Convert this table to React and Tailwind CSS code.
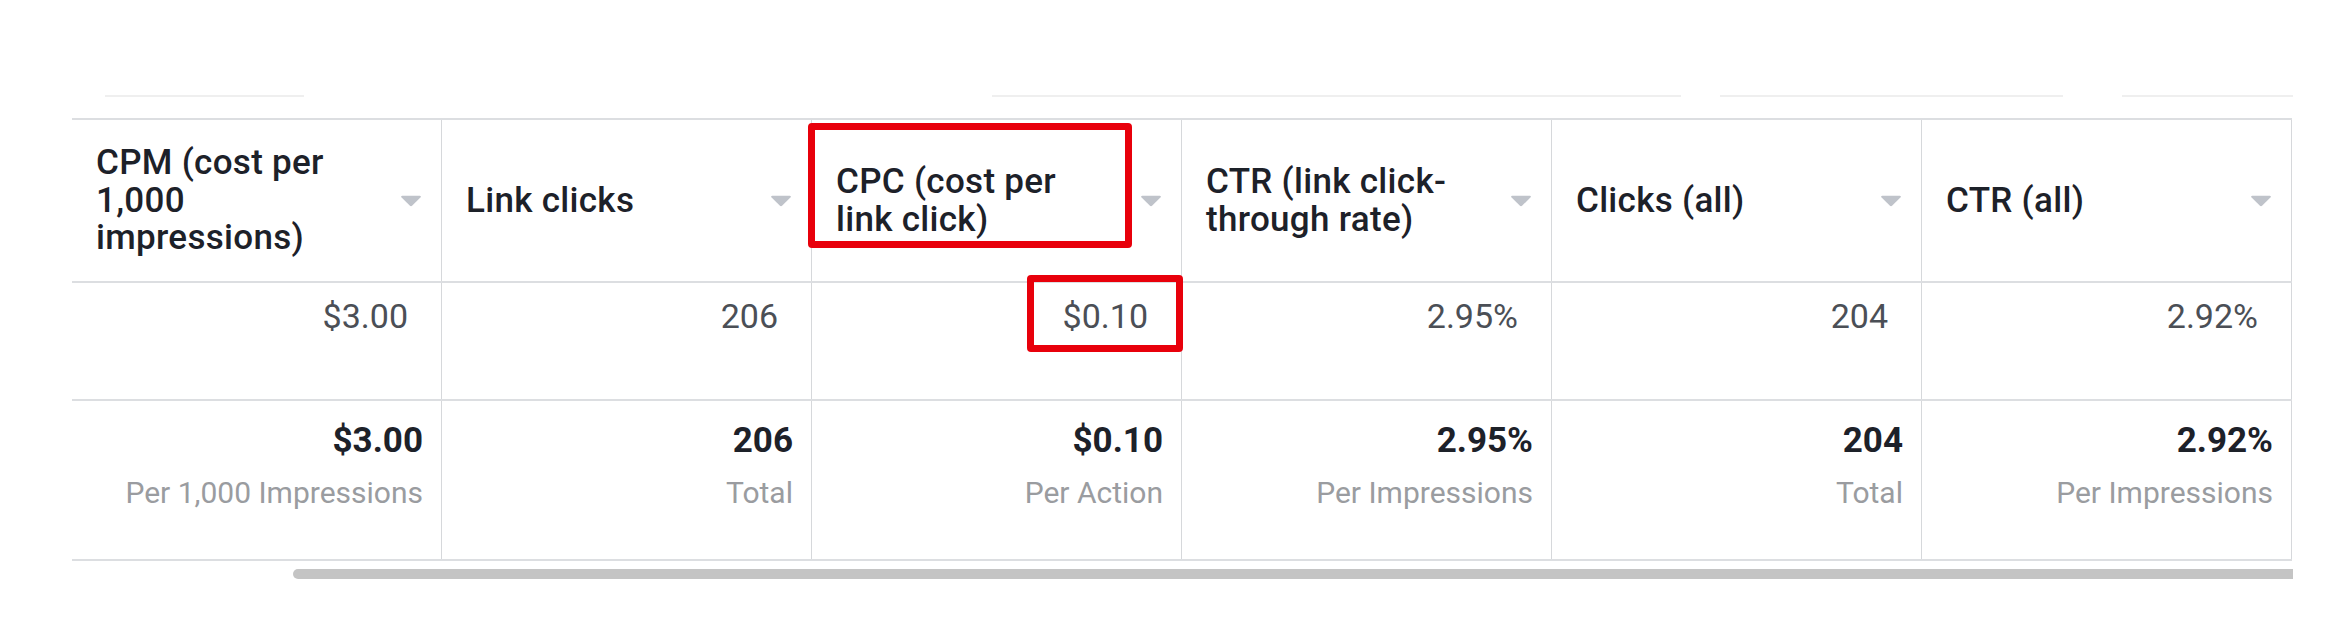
import React from "react";

const columns = [
  { label: "CPM (cost per 1,000 impressions)", value: "$3.00", total: "$3.00", sub: "Per 1,000 Impressions" },
  { label: "Link clicks", value: "206", total: "206", sub: "Total" },
  { label: "CPC (cost per link click)", value: "$0.10", total: "$0.10", sub: "Per Action", highlight: true },
  { label: "CTR (link click-through rate)", value: "2.95%", total: "2.95%", sub: "Per Impressions" },
  { label: "Clicks (all)", value: "204", total: "204", sub: "Total" },
  { label: "CTR (all)", value: "2.92%", total: "2.92%", sub: "Per Impressions" },
];

function Caret() {
  return (
    <svg width="22" height="12" viewBox="0 0 22 12" className="shrink-0">
      <path
        d="M2.2 0.8 H19.8 Q21.6 0.8 20.4 2.4 L12.3 10.6 Q11 11.8 9.7 10.6 L1.6 2.4 Q0.4 0.8 2.2 0.8 Z"
        fill="#bfc3ca"
      />
    </svg>
  );
}

export default function App() {
  return (
    <div className="w-[2342px] h-[637px] bg-white overflow-hidden [font-family:Roboto,'Liberation_Sans',sans-serif]">
      {/* faint lines above table */}
      <div className="pt-[95px] flex h-[97px]">
        <div className="ml-[105px] w-[199px] h-[2px] bg-[#efefef]" />
        <div className="ml-[688px] w-[689px] h-[2px] bg-[#efefef]" />
        <div className="ml-[39px] w-[343px] h-[2px] bg-[#efefef]" />
        <div className="ml-[59px] w-[171px] h-[2px] bg-[#efefef]" />
      </div>

      <div className="mt-[21px] ml-[72px] w-[2220px]">
        <div className="border-t-2 border-[#dcdee1]">
          {/* header */}
          <div className="grid grid-cols-6 h-[163px] border-b-2 border-[#dcdee1]">
            {columns.map((c, i) => (
              <div
                key={i}
                className="relative flex items-center justify-between pl-[24px] pr-[19px] border-r border-[#d6d8db]"
              >
                <div className="w-[270px] text-[35px] leading-[37.5px] font-medium text-[#1d2129] tracking-[0.3px]">
                  {c.label}
                </div>
                <Caret />
                {c.highlight && (
                  <div className="absolute left-[-4px] top-[3px] w-[324px] h-[125px] border-[7px] border-[#e8000b] rounded-[4px]" />
                )}
              </div>
            ))}
          </div>

          {/* data row */}
          <div className="grid grid-cols-6 h-[118px] border-b-2 border-[#dcdee1]">
            {columns.map((c, i) => (
              <div
                key={i}
                className="relative pt-[13px] pr-[33px] text-right border-r border-[#d6d8db] text-[34px] leading-[40px] text-[#4b4f56]"
              >
                {c.value}
                {c.highlight && (
                  <div className="absolute left-[215px] top-[-8px] w-[156px] h-[77px] border-[7px] border-[#e8000b] rounded-[4px]" />
                )}
              </div>
            ))}
          </div>

          {/* totals row */}
          <div className="grid grid-cols-6 h-[160px] border-b-2 border-[#dcdee1]">
            {columns.map((c, i) => (
              <div
                key={i}
                className="flex flex-col items-end pt-[20px] pr-[18px] border-r border-[#d6d8db]"
              >
                <div className="text-[35px] leading-[40px] font-bold text-[#1d2129]">{c.total}</div>
                <div className="mt-[14px] text-[30px] leading-[36px] text-[#9a9ca0]">{c.sub}</div>
              </div>
            ))}
          </div>
        </div>

        {/* horizontal scrollbar */}
        <div className="mt-[8px] ml-[221px] w-[2000px] h-[10px] bg-[#c4c4c4] rounded-l-full" />
      </div>
    </div>
  );
}
